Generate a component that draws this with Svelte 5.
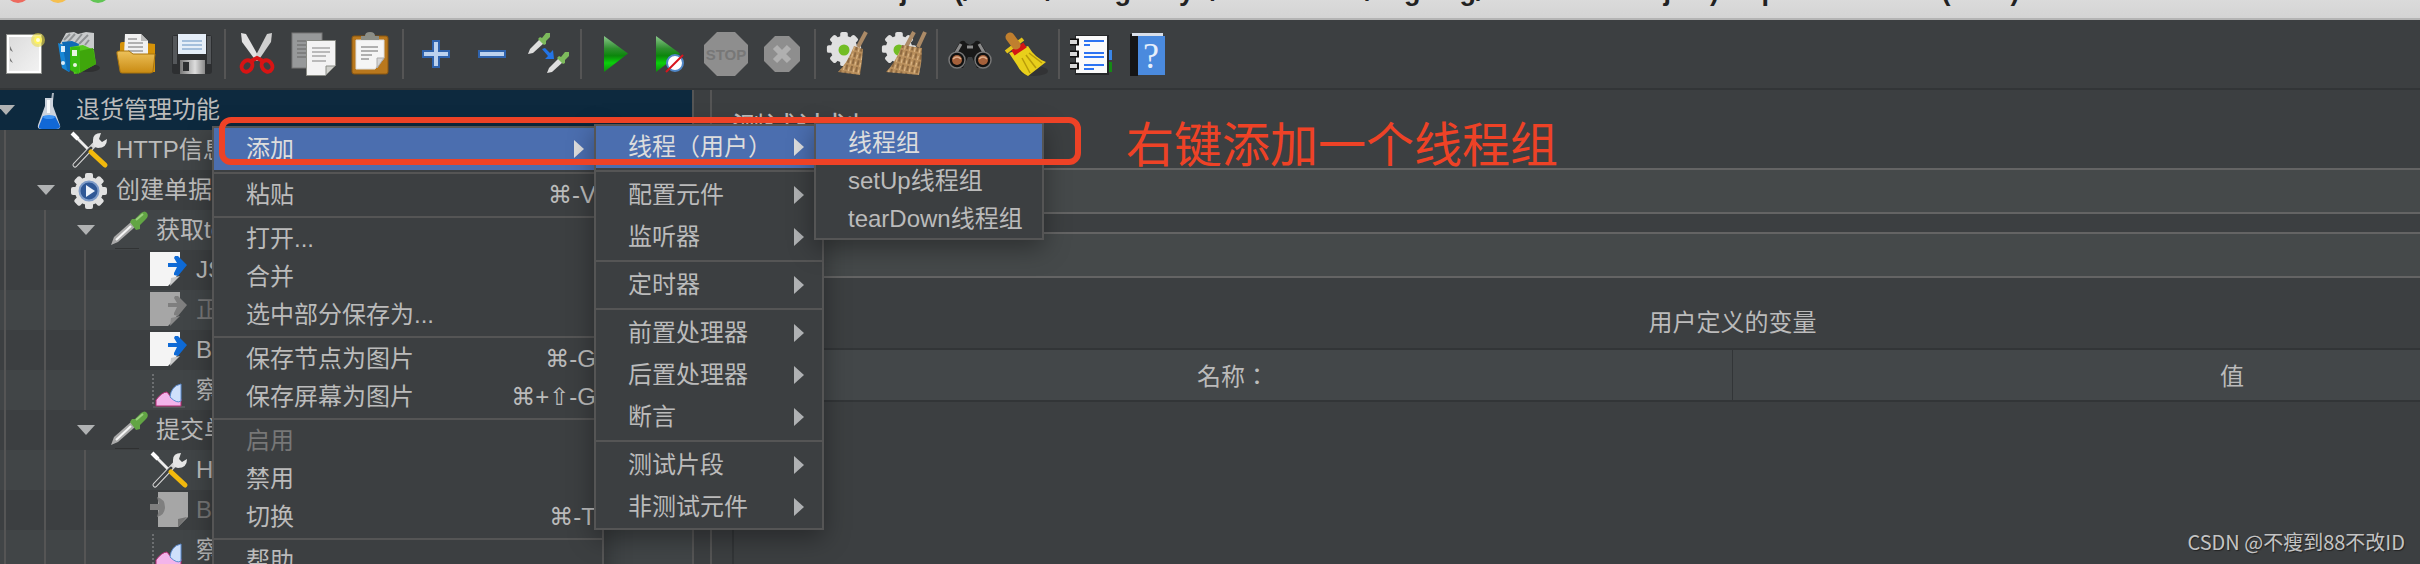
<script>
  const toolbar = [
    ['new', 'templates', 'open', 'save'],
    ['cut', 'copy', 'paste'],
    ['plus', 'minus', 'toggle'],
    ['start', 'start-no-timers', 'stop', 'shutdown'],
    ['clear', 'clear-all'],
    ['search', 'search-reset'],
    ['functions', 'help'],
  ];

  const tree = [
    { level: 0, icon: 'flask', label: '退货管理功能', open: true, selected: true },
    { level: 1, icon: 'tools', label: 'HTTP信息头管理器' },
    { level: 1, icon: 'gear', label: '创建单据', open: true },
    { level: 2, icon: 'dropper', label: '获取token', open: true },
    { level: 3, icon: 'extract', label: 'JSON提取器' },
    { level: 3, icon: 'extract', label: '正则表达式提取器', disabled: true },
    { level: 3, icon: 'extract', label: 'BeanShell 后置处理程序' },
    { level: 3, icon: 'chart', label: '察看结果树' },
    { level: 2, icon: 'dropper', label: '提交单据', open: true },
    { level: 3, icon: 'tools', label: 'HTTP信息头管理器' },
    { level: 3, icon: 'pre', label: 'BeanShell 预处理程序', disabled: true },
    { level: 3, icon: 'chart', label: '察看结果树' },
  ];

  const threadMenu = [
    [{ label: '线程组', active: true }, { label: 'setUp线程组' }, { label: 'tearDown线程组' }],
  ];

  const addMenu = [
    [{ label: '线程（用户）', active: true, children: threadMenu }],
    [{ label: '配置元件', children: [] }, { label: '监听器', children: [] }],
    [{ label: '定时器', children: [] }],
    [
      { label: '前置处理器', children: [] },
      { label: '后置处理器', children: [] },
      { label: '断言', children: [] },
    ],
    [{ label: '测试片段', children: [] }, { label: '非测试元件', children: [] }],
  ];

  const contextMenu = [
    [{ label: '添加', active: true, children: addMenu }],
    [{ label: '粘贴', keys: '⌘-V' }],
    [{ label: '打开...' }, { label: '合并' }, { label: '选中部分保存为...' }],
    [
      { label: '保存节点为图片', keys: '⌘-G' },
      { label: '保存屏幕为图片', keys: '⌘+⇧-G' },
    ],
    [{ label: '启用', disabled: true }, { label: '禁用' }, { label: '切换', keys: '⌘-T' }],
    [{ label: '帮助' }],
  ];

  const teeth = [0, 45, 90, 135, 180, 225, 270, 315];
</script>

{#snippet menu(groups)}
  <div class="menu" role="menu">
    {#each groups as group, i}
      {#if i > 0}<div class="menu-line" role="separator"></div>{/if}
      {#each group as item}
        <button
          class="menu-item"
          class:parent={item.children}
          class:active={item.active}
          role="menuitem"
          disabled={item.disabled}
        >
          <span>{item.label}</span>
          {#if item.keys}<span class="keys">{item.keys}</span>{/if}
          {#if item.children}
            <svg class="menu-arrow" width="10" height="18" viewBox="0 0 10 18"><path d="M0 0 10 9 0 18z" /></svg>
          {/if}
        </button>
        {#if item.children && item.children.length}
          <div class="submenu">{@render menu(item.children)}</div>
        {/if}
      {/each}
    {/each}
  </div>
{/snippet}

{#snippet gear(cx, cy, s)}
  <g transform="translate({cx} {cy}) scale({s})">
    {#each teeth as a}
      <rect x="-4" y="-18" width="8" height="9" rx="2" fill="#e0e0e0" transform="rotate({a})" />
    {/each}
    <circle r="14" fill="#e0e0e0" />
  </g>
{/snippet}

{#snippet bristles(d)}
  <path {d} fill="url(#straw)" />
{/snippet}

{#snippet toolIcon(name)}
  <svg width="48" height="48" viewBox="0 0 48 48" aria-hidden="true">
    {#if name === 'new'}
      <rect x="6" y="4" width="36" height="40" fill="#8d8f8c" />
      <rect x="7" y="5" width="34" height="38" fill="#fff" />
      <rect x="9" y="7" width="30" height="34" fill="url(#paper)" />
      <path d="M10 16v4l3 2zM10 28v3l3 2z" fill="#777" />
      <circle cx="38" cy="10" r="7" fill="#e9dc4a" opacity=".6" />
      <circle cx="38" cy="10" r="4" fill="#fff45e" />
      <circle cx="38" cy="10" r="2" fill="#fffde0" />
    {:else if name === 'templates'}
      <ellipse cx="32" cy="38" rx="12" ry="4" fill="#222" opacity=".5" />
      <path d="m4 14 6-11 8-1 4 2 8-2 8 1v16l-14 5z" fill="#c9cbcc" />
      <path d="m8 10 6-6m-3 9 8-9m-1 10 8-10m-3 10 9-9m-3 10 4-5" stroke="#8f9294" stroke-width="2" fill="none" />
      <path d="m2 13 11 4v25L6 38z" fill="#1787d6" />
      <path d="m6 12 10-1 7 3-1 7-8 3v18l-3-2z" fill="#0f6bb5" />
      <path d="m14 17 7 3v24l-7-4z" fill="#2fb50a" />
      <path d="m14 17 13-2 11 5 2 14-17 9-5 1z" fill="#55c81e" />
      <path d="m23 21 14-3 3 16-16 9z" fill="#3fa60b" />
      <path d="M15 17h9l-1 27-8-4z" fill="#3abb10" />
      <rect x="16" y="20" width="5" height="6" fill="#e8f6e0" />
      <rect x="5" y="16" width="4" height="6" fill="#d9ecfa" />
      <circle cx="7" cy="33" r="2" fill="#d9ecfa" /><circle cx="19" cy="35" r="2" fill="#e8f6e0" />
    {:else if name === 'open'}
      <path d="M8 14q0-2 2-2h10v8h14v-7l9 1v28H8z" fill="#d59208" />
      <path d="M13 4h16l7 7v14H12z" fill="#f1f1f1" />
      <path d="m29 4 0 7h7z" fill="#bbb" />
      <path d="M16 9h9M16 13h15M16 17h15M16 21h15" stroke="#9b9b9b" stroke-width="1.6" />
      <path d="M5 24q-1-3 2-3h10l4 3h22l-2 17q0 2-3 2H10q-2 0-2-2z" fill="url(#folder)" stroke="#a8740e" />
    {:else if name === 'save'}
      <rect x="4" y="5" width="40" height="39" rx="3" fill="#2d2f31" />
      <path d="M5 6h4v28H5zM39 6h4v28h-4z" fill="#55585b" />
      <rect x="10" y="4" width="28" height="20" fill="#e5eef8" />
      <path d="M14 11h20M14 15h20M14 19h20" stroke="#8fb0d2" stroke-width="1.6" />
      <rect x="12" y="30" width="25" height="14" fill="url(#metal)" />
      <rect x="15" y="32" width="6" height="9" fill="#2d2f31" />
    {:else if name === 'cut'}
      <path d="m7 3 5 1 14 25-4 2L8 12z" fill="#e2e2e2" />
      <path d="m38 3-5 1-13 25 4 2 13-19z" fill="#cfcfcf" />
      <g fill="none" stroke="#d81414" stroke-width="4">
        <ellipse cx="13" cy="36" rx="5" ry="6" transform="rotate(35 13 36)" />
        <ellipse cx="33" cy="36" rx="5" ry="6" transform="rotate(-35 33 36)" />
        <path d="m17 31 6-3 6 3" />
      </g>
    {:else if name === 'copy'}
      <rect x="2" y="3" width="30" height="35" fill="#97999a" stroke="#777" />
      <path d="M7 11h20M7 15h20M7 19h20M7 23h20M7 27h10" stroke="#777" stroke-width="1.6" />
      <path d="M16.500 10.500h29v25l-10 10h-19z" fill="#f3f3f3" stroke="#8a8c86" />
      <path d="M22 18h18M22 22h18M22 26h14M22 31h14" stroke="#a8a8a8" stroke-width="1.6" />
      <path d="M45 36h-9v9z" fill="#cfd0cc" stroke="#8a8c86" />
    {:else if name === 'paste'}
      <rect x="6" y="6" width="36" height="38" rx="2" fill="#b9781d" stroke="#8a560f" />
      <path d="M10 10h28v18l-9 11H10z" fill="#f5f5f5" stroke="#ddd" />
      <path d="M38 28h-7v10z" fill="#d5d5d5" stroke="#aaa" />
      <path d="M15 17h17M15 21h17M15 25h11M15 29h8" stroke="#999" stroke-width="1.6" />
      <path d="M15 10V6h4q0-4 5-4t5 4h4v4z" fill="#8c8e86" />
    {:else if name === 'plus'}
      <path d="M21 11h6v10h10v6H27v10h-6V27H11v-6h10z" fill="#bcd2ee" stroke="#2f63ad" stroke-width="2" />
    {:else if name === 'minus'}
      <path d="M11 21h26v6H11z" fill="#bcd2ee" stroke="#2f63ad" stroke-width="2" />
    {:else if name === 'toggle'}
      <path d="M4 24 6 19 16 9l4 4L9 23z" fill="#dedede" />
      <path d="m14 9 2-2 2 1 4-5 4 0 0 4-4 4 0 3-2 1z" fill="#7dba5c" />
      <g transform="translate(19 19)">
        <path d="M4 24 6 19 16 9l4 4L9 23z" fill="#dedede" />
        <path d="m14 9 2-2 2 1 4-5 4 0 0 4-4 4 0 3-2 1z" fill="#7dba5c" />
      </g>
      <path d="m18 19 3-1 5 5 3-3 1 9h-9l3-3z" fill="#2374e6" />
    {:else if name === 'start'}
      <path d="M14 6 38 23.500 14 42z" fill="url(#go)" />
    {:else if name === 'start-no-timers'}
      <path d="M10 6 34 23.500 10 42z" fill="url(#go)" />
      <circle cx="29" cy="33" r="8" fill="#fff" stroke="#4f86c6" stroke-width="2" />
      <path d="m20 42 17-17" stroke="#d8141c" stroke-width="2" />
    {:else if name === 'stop'}
      <path d="M15 2h18l13 13v18L33 46H15L2 33V15z" fill="#8e8e8e" />
      <text x="24" y="30" text-anchor="middle" class="stop-text">STOP</text>
    {:else if name === 'shutdown'}
      <path d="M17 6h14l11 11v14L31 42H17L6 31V17z" fill="#8e8e8e" />
      <path d="m17 17 14 14m0-14L17 31" stroke="#b0b0b0" stroke-width="6" />
    {:else if name === 'clear'}
      {@render gear(20, 19, 0.95)}
      <circle cx="20" cy="20" r="5.500" fill="#72bd24" />
      <path d="m42 2-8 15" stroke="#ab8a66" stroke-width="4" />
      {@render bristles('m30 16 9 3q-1 14-3 26l-22-3q10-10 16-26z')}
    {:else if name === 'clear-all'}
      {@render gear(19, 19, 0.95)}
      <circle cx="19" cy="20" r="5.500" fill="#72bd24" />
      <path d="m34 2-8 15M45 2l-7 15" stroke="#ab8a66" stroke-width="4" />
      {@render bristles('m22 15 20 3q0 14-3 27l-33-3q10-10 16-27z')}
    {:else if name === 'search'}
      <path d="M14 12q4-3 6 1l4 2 4-2q2-4 6-1l9 15v9l-12 2-5-11h-4l-5 11-12-2v-9z" fill="#181818" />
      <path d="m15 14-7 12M33 14l7 12M21 17h6" stroke="#8a8a8a" stroke-width="3" />
      <circle cx="11" cy="30" r="8" fill="#111" stroke="#777" stroke-width="1.500" />
      <circle cx="37" cy="30" r="8" fill="#111" stroke="#777" stroke-width="1.500" />
      <circle cx="11" cy="30" r="5" fill="#a5603a" /><circle cx="37" cy="30" r="5" fill="#a5603a" />
      <path d="M7 29q4-4 8 0M33 29q4-4 8 0" stroke="#dfae8c" stroke-width="1.500" fill="none" />
    {:else if name === 'search-reset'}
      <ellipse cx="32" cy="41" rx="14" ry="5" fill="#222" opacity=".4" />
      <path d="m15 20-8 3 8 12q4 8 11 11l18-14q-11-4-18-16z" fill="#e8cf1b" />
      <path d="m20 28 8 15M24 25l10 13M27 23l13 10" stroke="#b89b0a" stroke-width="1.500" />
      <path d="m4 22 17-13" stroke="#e3c41a" stroke-width="4" />
      <path d="M11 23 23 15" stroke="#d31515" stroke-width="6" />
      <path d="m8 7 6 8" stroke="#c07f2e" stroke-width="9" stroke-linecap="round" />
    {:else if name === 'functions'}
      <path d="M36 20h8v10h-8z" fill="#3a86e8" /><path d="M36 32h8v10h-8z" fill="#158a15" />
      <rect x="7" y="5" width="34" height="40" fill="#26282a" />
      <rect x="8" y="6" width="31" height="37" fill="#fafafa" />
      <path d="M16 11h20M16 23h20M16 27h20M16 35h20" stroke="#2d74f2" stroke-width="2" />
      <path d="M16 15h6M16 39h10" stroke="#2d74f2" stroke-width="2" />
      <path d="M2 12h9M2 24h9M2 36h9" stroke="#111" stroke-width="7" />
      <path d="M2 12h7M2 24h7M2 36h7" stroke="#d8d8d8" stroke-width="4" />
    {:else if name === 'help'}
      <path d="M6 4h8v42H6z" fill="#151515" />
      <path d="M8 3h31v3H8z" fill="#d9dfe9" />
      <rect x="14" y="6" width="27" height="39" fill="#4a8ade" />
      <text x="27" y="38" text-anchor="middle" class="help-text">?</text>
    {/if}
  </svg>
{/snippet}

{#snippet nodeIcon(name)}
  <svg class="node-icon" width="40" height="40" viewBox="0 0 40 40" aria-hidden="true">
    {#if name === 'flask'}
      <path d="m23 3 2 0-1 8h-2z" fill="#aab4bf" />
      <path d="M16 8h8v8l7 19q1 4-3 4H12q-4 0-3-4l7-19z" fill="#ccd3dd" />
      <path d="m14 26h12l5 10q0 3-4 3H13q-4 0-3-3z" fill="#1168d6" />
      <path d="M18 10h3v13h-3z" fill="#f6f8fa" />
      <ellipse cx="20" cy="27" rx="6" ry="2" fill="#3d94f5" />
    {:else if name === 'tools'}
      <path d="m3 5 2-2 17 17-2 2z" fill="#ededed" />
      <path d="m3 3 6 6" stroke="#fff" stroke-width="4" />
      <path d="m6 35 19-20" stroke="#d6d6d6" stroke-width="5" stroke-linecap="round" />
      <path d="m6 35 16-17" stroke="#3f4244" stroke-width="3" stroke-linecap="round" />
      <path d="M24 10q0-7 8-7l-2 6 3 3 5-3q0 9-9 9-6-1-5-8z" fill="#e6e6e6" />
      <path d="m22 22 14 13" stroke="#f2b90d" stroke-width="5" stroke-linecap="round" />
    {:else if name === 'gear'}
      {@render gear(20, 21, 1)}
      <circle cx="20" cy="21" r="9.500" fill="#2f5896" stroke="#7f9cc8" stroke-width="2" />
      <path d="m17 15 9 6-9 6z" fill="#e9f0fa" />
    {:else if name === 'dropper'}
      <path d="M6 38h24v1H6z" fill="#222" opacity=".5" />
      <path d="m2 35 3-8 17-15 4 5-17 15z" fill="#a9a9a9" />
      <path d="m7 30 15-14" stroke="#f6f6f6" stroke-width="2" />
      <path d="m21 12 2-3 3 0 6-6q4-3 6 0 2 3-1 6l-6 6v4l-4 1z" fill="#62a544" />
      <path d="m27 10 7-6" stroke="#9bd07e" stroke-width="2" />
    {:else if name === 'extract'}
      <path d="M1 2h30v20l-8 10-4 4H1z" fill="#f4f4f4" />
      <path d="m31 26-10 10 1-8z" fill="#c9c9c9" />
      <path class="mark" d="M19 13h9l-3-5 1-2 3 0 9 9-9 11-4-1 0-2 3-6h-9z" fill="#0e6ad6" />
    {:else if name === 'pre'}
      <path d="M9 2h30v25l-10 10H9z" fill="#f4f4f4" />
      <path d="m38 27-9 10v-8z" fill="#aaa" />
      <path class="mark" d="M1 14h9l-2-7q8 2 8 10t-8 10l2-7H1z" fill="#777" />
    {:else if name === 'chart'}
      <path d="M4 4v32" stroke="#6c6f71" stroke-width="2" stroke-dasharray="2 2" />
      <path d="M4 37h32" stroke="#6c6f71" />
      <path d="M7 36v-6q6-8 11-8l4 5 10 2v7z" fill="#f3b4ea" stroke="#b32a72" />
      <path d="M32 14v17q-4 3-11-4 1-11 11-13z" fill="#cfe0fb" stroke="#5b8bd0" />
    {/if}
  </svg>
{/snippet}

<svg class="defs" width="0" height="0" aria-hidden="true">
  <defs>
    <linearGradient id="paper" x2="1" y2="1"><stop stop-color="#dcdcdc" /><stop offset="1" stop-color="#f2f2f2" /></linearGradient>
    <linearGradient id="folder" x2="0" y2="1"><stop stop-color="#edc15a" /><stop offset="1" stop-color="#c98a12" /></linearGradient>
    <linearGradient id="metal"><stop stop-color="#777" /><stop offset=".6" stop-color="#ddd" /><stop offset="1" stop-color="#888" /></linearGradient>
    <linearGradient id="go" x2="0" y2="1"><stop stop-color="#8cc98c" /><stop offset=".35" stop-color="#2f8f2f" /><stop offset=".55" stop-color="#0b860b" /><stop offset=".75" stop-color="#0bd00b" /><stop offset="1" stop-color="#0e8a0e" /></linearGradient>
    <pattern id="straw" width="5" height="7" patternUnits="userSpaceOnUse" patternTransform="rotate(14)">
      <rect width="5" height="7" fill="#b98f5c" /><rect width="2" height="5" fill="#8f6a41" /><rect x="3" y="2" width="1" height="4" fill="#dcb888" />
    </pattern>
  </defs>
</svg>

<div class="window">
  <header class="titlebar">
    <span class="light close"></span>
    <span class="light minimize"></span>
    <span class="light zoom"></span>
    <h1>ReGoods.jmx (/Users/zhangdaoyu/Documents/lingxing/ReturnGoods.jmx) - Apache JMeter (5.4.1)</h1>
  </header>

  <div class="toolbar" role="toolbar">
    {#each toolbar as group, i}
      {#if i > 0}<span class="divider"></span>{/if}
      {#each group as name}
        <button class="tool" aria-label={name}>{@render toolIcon(name)}</button>
      {/each}
    {/each}
  </div>

  <div class="panes">
    <ul class="tree">
      {#each tree as node}
        <li class:selected={node.selected} class:disabled={node.disabled}>
          {#each { length: node.level } as _}<span class="guide"></span>{/each}
          <svg class="twist" width="29" height="10" viewBox="0 0 29 10">
            {#if node.open}<path d="M-3 0h18L6 10z" />{/if}
          </svg>
          {@render nodeIcon(node.icon)}
          <span class="node-label">{node.label}</span>
        </li>
      {/each}
    </ul>
    <div class="splitter"></div>
    <main>
      <h2>测试计划</h2>
      <div class="field">
        <label for="plan-name">名称：</label>
        <input id="plan-name" />
      </div>
      <div class="field">
        <label for="plan-note">注释：</label>
        <input id="plan-note" />
      </div>
      <h3>用户定义的变量</h3>
      <div class="variables">
        <table>
          <thead>
            <tr><th>名称：</th><th>值</th></tr>
          </thead>
        </table>
      </div>
    </main>
  </div>

  <div class="context">{@render menu(contextMenu)}</div>
  <div class="callout"></div>
  <p class="callout-text">右键添加一个线程组</p>
  <span class="watermark">CSDN @不瘦到88不改ID</span>
</div>

<style>
  :global(body) {
    background: #3c3f41;
  }

  .window {
    position: relative;
    display: flex;
    flex-direction: column;
    height: 100vh;
    overflow: hidden;
    background: #3c3f41;
    color: #bbb;
    font: 24px/38px "Liberation Sans", "Noto Sans CJK SC", sans-serif;
    white-space: nowrap;
  }

  .defs {
    position: absolute;
  }

  h1, h2, h3, p, ul {
    margin: 0;
    padding: 0;
    font-weight: normal;
  }

  button {
    border: 0;
    padding: 0;
    background: none;
    color: inherit;
    font: inherit;
  }

  /* the window is dragged past the top and right screen edges */
  .titlebar {
    display: flex;
    flex: none;
    align-items: center;
    gap: 16px;
    box-sizing: border-box;
    height: 56px;
    margin: -36px -372px 0 0;
    padding: 0 126px 0 6px;
    border-bottom: 2px solid #b4b4b4;
    background: linear-gradient(#e8e8e8, #d4d4d4);
    color: #222;
  }

  .titlebar h1 {
    flex: 1;
    font-size: 27px;
    font-weight: bold;
    text-align: center;
  }

  .light {
    width: 24px;
    height: 24px;
    border-radius: 50%;
  }

  .close {
    background: #ed6a5e;
  }

  .minimize {
    background: #f5bf4f;
  }

  .zoom {
    background: #61c554;
  }

  .toolbar {
    display: flex;
    flex: none;
    align-items: center;
    gap: 8px;
    height: 68px;
    border-bottom: 2px solid #323537;
  }

  .tool {
    width: 48px;
    height: 48px;
  }

  .tool svg {
    display: block;
  }

  .divider {
    width: 2px;
    height: 50px;
    background: #555;
  }

  .stop-text {
    fill: #777;
    font: bold 15px "Liberation Sans", sans-serif;
  }

  .help-text {
    fill: #e6effb;
    font: 36px "Liberation Serif", serif;
  }

  .panes {
    display: flex;
    flex: 1;
    min-height: 0;
  }

  .tree {
    flex: none;
    width: 692px;
    overflow: hidden;
    list-style: none;
  }

  .tree li {
    display: flex;
    align-items: center;
    height: 40px;
  }

  .tree li:nth-child(even) {
    background: #414547;
  }

  .tree li.selected {
    background: #0d293e;
  }

  .guide {
    flex: none;
    box-sizing: border-box;
    width: 36px;
    height: 40px;
    margin-left: 4px;
    border-left: 2px solid #555;
  }

  .twist {
    flex: none;
    overflow: visible;
    fill: #b0b2b3;
  }

  .node-icon {
    flex: none;
    margin-right: 7px;
  }

  .disabled .node-label {
    color: #777;
  }

  .disabled .node-icon {
    filter: grayscale(1) brightness(0.68);
  }

  .disabled .mark {
    fill: #bbb;
  }

  .splitter {
    flex: none;
    width: 16px;
    border: solid #555;
    border-width: 0 2px;
  }

  main {
    flex: 1;
    margin-right: -313px;
    padding: 20px 0 0 20px;
  }

  h2 {
    margin-bottom: 20px;
    font-size: 32px;
  }

  .field {
    display: flex;
    align-items: center;
    height: 46px;
    margin-bottom: 18px;
  }

  .field label {
    width: 76px;
  }

  .field input {
    flex: 1;
    box-sizing: border-box;
    height: 46px;
    border: 2px solid #646464;
    background: #45494a;
    color: #bbb;
    font: inherit;
  }

  h3 {
    margin: 26px 0 6px;
    font-size: 24px;
    text-align: center;
  }

  .variables {
    height: 100vh;
    border: 2px solid #323537;
  }

  table {
    width: 100%;
    border-collapse: collapse;
    table-layout: fixed;
  }

  th {
    height: 50px;
    padding: 0;
    border-bottom: 2px solid #323537;
    background: #434749;
    font-family: "Noto Sans CJK TC", sans-serif;
    font-weight: normal;
  }

  th + th {
    border-left: 1px solid #323537;
  }

  .context {
    position: absolute;
    top: 126px;
    left: 212px;
    width: 392px;
    isolation: isolate;
  }

  .submenu {
    position: absolute;
    top: -4px;
    left: calc(100% - 8px);
    z-index: 1;
    width: 230px;
  }

  .menu {
    position: relative;
    border: 2px solid #555;
    background: #3c3f41;
    box-shadow: 0 8px 24px rgba(0, 0, 0, 0.35);
  }

  .menu-item {
    display: flex;
    align-items: center;
    width: 100%;
    height: 38px;
    padding: 0 6px 0 32px;
  }

  .menu-item.parent {
    height: 42px;
    padding-right: 18px;
  }

  .menu-item.active {
    background: #4b6eaf;
    color: #ddd;
  }

  .menu-item:disabled {
    color: #777;
  }

  .keys,
  .menu-arrow {
    margin-left: auto;
  }

  .keys {
    font-family: "Liberation Sans", "DejaVu Sans", sans-serif;
  }

  .menu-arrow {
    fill: #afb1b3;
  }

  .active .menu-arrow {
    fill: #ddd;
  }

  .menu-line {
    height: 2px;
    margin: 2px 0;
    background: #555;
  }

  .callout {
    position: absolute;
    top: 117px;
    left: 219px;
    box-sizing: border-box;
    width: 862px;
    height: 48px;
    border: 6px solid #ee4226;
    border-radius: 12px;
    pointer-events: none;
  }

  .callout-text {
    position: absolute;
    top: 116px;
    left: 1126px;
    color: #ee4226;
    font-size: 48px;
    line-height: 60px;
  }

  .watermark {
    position: absolute;
    right: 15px;
    bottom: 10px;
    color: #c4c4c4;
    font-family: "Noto Sans CJK SC", sans-serif;
    font-size: 20px;
    line-height: 24px;
    text-shadow: 1px 1px 1px #222;
  }
</style>
